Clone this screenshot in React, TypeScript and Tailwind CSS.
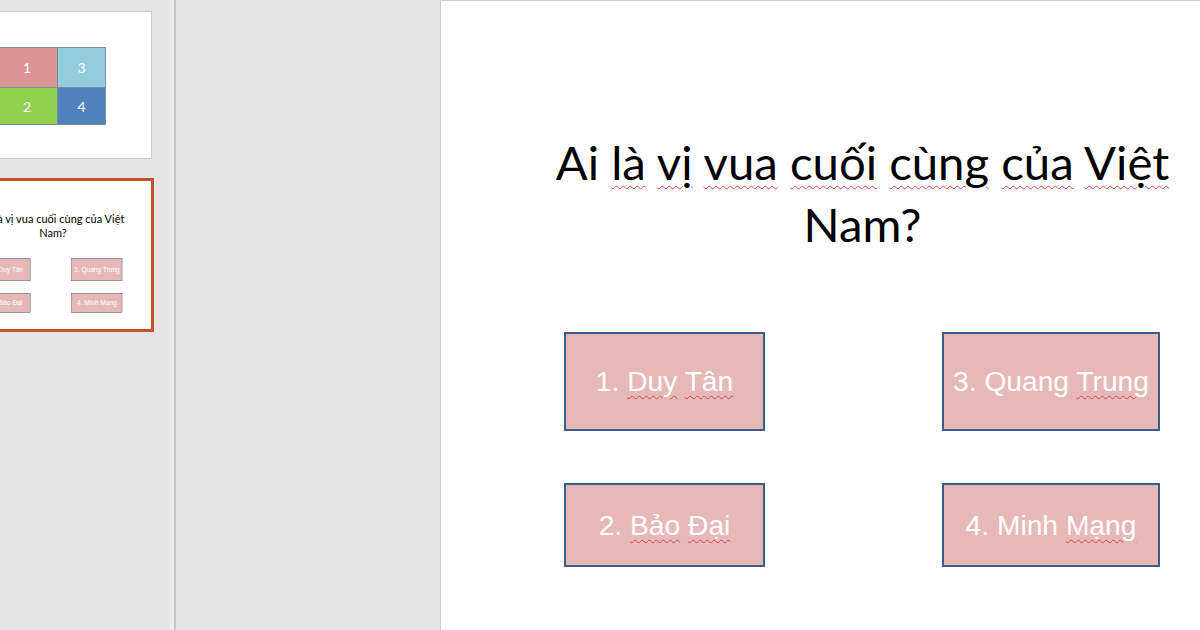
import React from 'react';

const answers = [
  { n: '1.', words: ['Duy', 'Tân'], plain: '', h: 'h-[99px]' },
  { n: '3.', words: ['Trung'], plain: 'Quang ', h: 'h-[99px]' },
  { n: '2.', words: ['Bảo', 'Đại'], plain: '', h: 'h-[84px]' },
  { n: '4.', words: ['Mạng'], plain: 'Minh ', h: 'h-[84px]' },
];

function Slide({ thumb = false }: { thumb?: boolean }) {
  // gạch chân lỗi chính tả (chỉ hiện trên slide lớn)
  const sp = thumb ? '' : 'underline decoration-wavy decoration-[#e0454b] decoration-1 underline-offset-[5px]';
  const spSmall = thumb ? '' : 'underline decoration-wavy decoration-[#e0454b] decoration-1 underline-offset-[4px]';
  const W = ({ t }: { t: string }) => <span className={sp}>{t}</span>;

  return (
    <div className="w-[843px] h-[635px] bg-white flex flex-col">
      <h1 className="pt-[130px] text-center text-[47.3px] leading-[62px] text-black font-['Lato',sans-serif]">
        Ai <W t="là" /> <W t="vị" /> <W t="vua" /> <W t="cuối" /> <W t="cùng" /> <W t="của" /> <W t="Việt" />
        <br />
        Nam?
      </h1>

      <div className="mt-[77px] ml-[123px] grid grid-cols-[201px_218px] gap-x-[177px] gap-y-[52px]">
        {answers.map((a) => (
          <div
            key={a.n}
            className={`${a.h} bg-[#e6b9b8] border-2 border-[#385d8a] flex items-center justify-center text-[28.2px] text-white font-['Liberation_Sans',Arial,sans-serif] whitespace-nowrap`}
          >
            <span>
              {a.n} {a.plain}
              {a.words.map((w, i) => (
                <React.Fragment key={w}>
                  <span className={spSmall}>{w}</span>
                  {i < a.words.length - 1 && ' '}
                </React.Fragment>
              ))}
            </span>
          </div>
        ))}
      </div>
    </div>
  );
}

export default function App() {
  return (
    <div className="w-[1200px] h-[630px] flex overflow-hidden bg-[#e5e5e5]">
      {/* THUMBNAILS */}
      <div className="w-[169px] shrink-0 h-full overflow-hidden flex flex-col">
        <div className="mt-[11px] -ml-[46px] w-[198px] h-[148px] shrink-0 border border-[#cacaca] bg-white">
          <div className="mt-[35px] ml-[41px] grid grid-cols-[60px_47px] grid-rows-[39px_36px] gap-px bg-[#7d8ca3] p-px w-fit text-[14px] text-white font-['Lato',sans-serif]">
            <div className="bg-[#d99694] flex items-center justify-center">1</div>
            <div className="bg-[#93cddd] flex items-center justify-center">3</div>
            <div className="bg-[#92d050] flex items-center justify-center">2</div>
            <div className="bg-[#4f81bd] flex items-center justify-center">4</div>
          </div>
        </div>

        <div className="mt-[19px] -ml-[48px] w-[202px] h-[154px] shrink-0 border-[3px] border-[#c5502c] bg-white overflow-hidden">
          <div className="w-[196px] h-[148px] overflow-hidden">
            <div className="origin-top-left scale-[0.2326]">
              <Slide thumb />
            </div>
          </div>
        </div>
      </div>

      {/* SPLITTER */}
      <div className="w-[5px] shrink-0 bg-[#ececec]" />
      <div className="w-[2px] shrink-0 bg-[#c8c8c8]" />

      {/* WORK AREA */}
      <div className="w-[264px] shrink-0 bg-[#e4e4e4]" />

      <div className="shrink-0 border-l border-t border-[#cfcfcf]">
        <Slide />
      </div>
    </div>
  );
}
